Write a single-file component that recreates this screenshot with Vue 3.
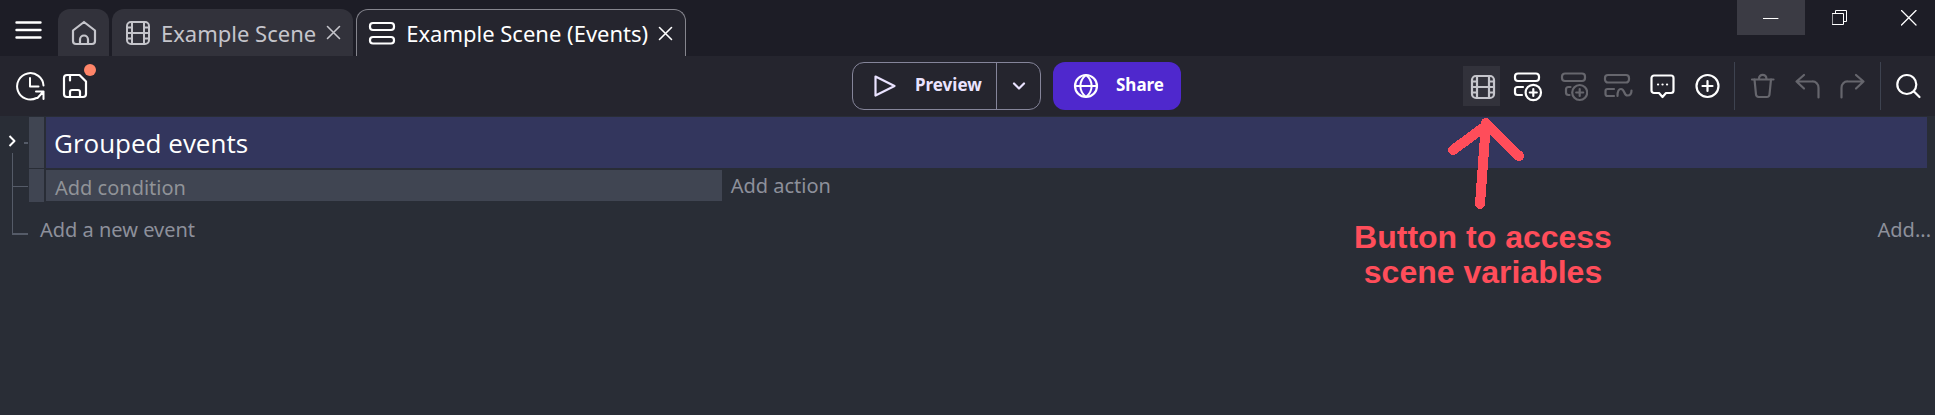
<script setup>
const film = [
  'M10 6H24a4 4 0 0 1 4 4V24a4 4 0 0 1-4 4H10a4 4 0 0 1-4-4V10a4 4 0 0 1 4-4Z',
  'M11 6V28M23 6V28M11 17H23M6 11.5H11M6 17H11M6 22.5H11M23 11.5H28M23 17H28M23 22.5H28',
]

const toolGroups = [
  [
    { label: 'Scene variables', boxed: true, paths: film },
    {
      label: 'Add an event',
      paths: [
        'M7 3.5H25a3 3 0 0 1 3 3V8a3 3 0 0 1-3 3H7a3 3 0 0 1-3-3V6.500a3 3 0 0 1 3-3Z',
        'M12 17H6.500A2.500 2.500 0 0 0 4 19.500V22.500A2.500 2.500 0 0 0 6.500 25H11',
        'M30 22.500a7.700 7.700 0 1 1-15.400 0a7.700 7.700 0 1 1 15.400 0Z',
        'M22.300 19V26M18.800 22.500H25.800',
      ],
    },
    {
      label: 'Add a sub-event',
      muted: true,
      paths: [
        'M9 3.5H26a3 3 0 0 1 3 3V8a3 3 0 0 1-3 3H9a3 3 0 0 1-3-3V6.500a3 3 0 0 1 3-3Z',
        'M14.500 17H12.500A2.500 2.500 0 0 0 10 19.500V22.500A2.500 2.500 0 0 0 12.500 25H13.500',
        'M31.200 22.500a7.500 7.500 0 1 1-15 0a7.500 7.500 0 1 1 15 0Z',
        'M23.700 19V26M20.200 22.500H27.200',
      ],
    },
    {
      label: 'Add another event',
      muted: true,
      paths: [
        'M7 5H25a3 3 0 0 1 3 3V9.500a3 3 0 0 1-3 3H7a3 3 0 0 1-3-3V8a3 3 0 0 1 3-3Z',
        'M13 19H6.500A2 2 0 0 0 4.500 21V24A2 2 0 0 0 6.500 26H13',
        'M16.500 26C16.500 21 18 19 20 19C24 19 22.500 25.500 26.500 25.500C29 25.500 30.500 23.500 30.500 20.500',
      ],
    },
    {
      label: 'Add a comment',
      paths: [
        'M8 5.500H25a2.500 2.500 0 0 1 2.500 2.500V20.500a2.500 2.500 0 0 1-2.500 2.500H20L16.500 27L13 23H8a2.500 2.500 0 0 1-2.500-2.500V8a2.500 2.500 0 0 1 2.500-2.500Z',
        'M12 14.500H12.100M16.500 14.500H16.600M21 14.500H21.100',
      ],
    },
    {
      label: 'Add another item',
      paths: ['M27.500 16a11 11 0 1 1-22 0a11 11 0 1 1 22 0Z', 'M16.500 11V21M11.500 16H21.500'],
    },
  ],
  [
    {
      label: 'Delete',
      muted: true,
      paths: ['M5 9.500H26.500M12 9.500V8.500a3.700 3.700 0 0 1 7.400 0V9.500', 'M7.500 9.500L9 24.500A2.800 2.800 0 0 0 11.700 27H19.700A2.800 2.800 0 0 0 22.500 24.500L24 9.500'],
    },
    { label: 'Undo', muted: true, paths: ['M12 5L4.500 11.500L12 18.500M4.500 11.500H20A6 6 0 0 1 26.500 18V27.500'] },
    { label: 'Redo', muted: true, paths: ['M19 5L26.500 11.500L19 18.500M26.500 11.500H11A6 6 0 0 0 4.500 18V27.500'] },
  ],
  [
    { label: 'Search', paths: ['M23.300 14.500a9.500 9.500 0 1 1-19 0a9.500 9.500 0 1 1 19 0Z', 'M21 21.500L26.500 27'] },
  ],
]
</script>

<template>
  <div class="editor">
    <header class="titlebar">
      <button class="menu" aria-label="Main menu">
        <svg width="28" height="20" viewBox="0 0 28 20"><path d="M2.500 2.500H26.500M2.500 10H26.500M2.500 17.500H26.500" stroke-width="2.400" /></svg>
      </button>
      <nav class="tabs" aria-label="Open editors">
        <div class="tab home">
          <button aria-label="Home">
            <svg width="26" height="26" viewBox="0 0 26 26"><path d="M2 10.500L13 2L24 10.500V21a3 3 0 0 1-3 3H5a3 3 0 0 1-3-3ZM9 24V19.500a4 4 0 0 1 8 0V24" stroke-width="2.200" /></svg>
          </button>
        </div>
        <div class="tab">
          <button class="tab-label">
            <svg width="26" height="26" viewBox="4 4 26 26"><path v-for="d in film" :key="d" :d="d" stroke-width="2" /></svg>
            <span>Example Scene</span>
          </button>
          <button aria-label="Close Example Scene">
            <svg width="15" height="15" viewBox="0 0 15 15"><path d="M1.500 1.500L13.500 13.500M13.500 1.500L1.500 13.500" stroke-width="1.600" /></svg>
          </button>
        </div>
        <div class="tab active">
          <button class="tab-label">
            <svg width="28" height="26" viewBox="0 0 28 26"><path d="M5 3H23a3 3 0 0 1 3 3V7a3 3 0 0 1-3 3H5a3 3 0 0 1-3-3V6a3 3 0 0 1 3-3ZM5 17H23a3 3 0 0 1 3 3V20.500a3 3 0 0 1-3 3H5a3 3 0 0 1-3-3V20a3 3 0 0 1 3-3Z" stroke-width="2.200" /></svg>
            <span>Example Scene (Events)</span>
          </button>
          <button aria-label="Close Example Scene (Events)">
            <svg width="15" height="15" viewBox="0 0 15 15"><path d="M1.500 1.500L13.500 13.500M13.500 1.500L1.500 13.500" stroke-width="1.600" /></svg>
          </button>
        </div>
      </nav>
      <div class="window-controls">
        <button class="minimize" aria-label="Minimize">
          <svg width="16" height="16" viewBox="0 0 16 16"><path d="M0 8.500H15" stroke-width="1" /></svg>
        </button>
        <button aria-label="Restore">
          <svg width="16" height="16" viewBox="0 0 16 16"><path d="M.5 3.500H11.500V14.500H.500ZM3.500 3.500V.500H14.500V11.500H11.500" stroke-width="1" stroke-linejoin="miter" /></svg>
        </button>
        <button class="close-window" aria-label="Close window">
          <svg width="16" height="16" viewBox="0 0 16 16"><path d="M.5 .500L15 15M15 .500L.500 15" stroke-width="1.300" /></svg>
        </button>
      </div>
    </header>

    <div class="toolbar">
      <div class="file-tools">
        <button aria-label="History">
          <svg width="30" height="32" viewBox="0 0 30 32"><path d="M28.500 15.500A13.200 13.200 0 1 0 21.500 28M15 8V16.500H23.500M21 21.500H28.500V29M28.500 21.500L22.500 28" stroke-width="2" /></svg>
        </button>
        <button class="save" aria-label="Save">
          <svg width="26" height="26" viewBox="0 0 26 26"><path d="M5 2H17.500L24 8.500V21a3 3 0 0 1-3 3H5a3 3 0 0 1-3-3V5a3 3 0 0 1 3-3ZM8 2V7.500M8 24V19a2 2 0 0 1 2-2H16a2 2 0 0 1 2 2V24" stroke-width="2.200" /></svg>
          <span class="unsaved"></span>
        </button>
      </div>
      <div class="main-actions">
        <div class="preview">
          <button class="preview-run">
            <svg width="24" height="24" viewBox="0 0 24 24"><path d="M2.500 2.500L21.500 12L2.500 21.500Z" stroke-width="2.200" /></svg>
            <span>Preview</span>
          </button>
          <button class="preview-more" aria-label="Preview options">
            <svg width="14" height="10" viewBox="0 0 14 10"><path d="M2 2.500L7 7.500L12 2.500" stroke-width="2.200" /></svg>
          </button>
        </div>
        <button class="share">
          <svg width="26" height="26" viewBox="0 0 26 26"><circle cx="13" cy="13" r="11" stroke-width="2.200" /><path d="M2 13H24M13 2C5.500 8 5.500 18 13 24C20.500 18 20.500 8 13 2Z" stroke-width="2" /></svg>
          <span>Share</span>
        </button>
      </div>
      <div class="tools">
        <template v-for="(group, g) in toolGroups" :key="g">
          <span v-if="g" class="divider"></span>
          <button v-for="tool in group" :key="tool.label" class="tool" :class="{ boxed: tool.boxed, muted: tool.muted }" :aria-label="tool.label">
            <svg width="32" height="32" viewBox="0 0 32 32"><path v-for="d in tool.paths" :key="d" :d="d" stroke-width="2.200" /></svg>
          </button>
        </template>
      </div>
    </div>

    <main class="sheet">
      <svg class="tree" width="29" height="120" viewBox="0 0 29 120">
        <path class="chevron" d="M9.500 19L14.500 24L9.500 29" />
        <path d="M12.500 36V116.500M12 69.500H28" stroke-width="1" />
        <path d="M24 26H28M12 117H28" stroke-width="2" />
      </svg>
      <div class="events">
        <div class="row">
          <span class="handle"></span>
          <h2 class="group-title">Grouped events</h2>
        </div>
        <div class="row body-row">
          <span class="handle"></span>
          <button class="condition">Add condition</button>
          <button class="action">Add action</button>
        </div>
        <div class="footer-row">
          <button>Add a new event</button>
          <button>Add...</button>
        </div>
      </div>
    </main>

    <div class="callout">
      <svg width="100" height="107" viewBox="0 0 100 107"><path d="M47 91L53 10M20 37L54 12L86 43" shape-rendering="crispEdges" /></svg>
      <p>Button to access<br />scene variables</p>
    </div>
  </div>
</template>

<style>
body {
  background: #292d36;
}
</style>

<style scoped>
.editor {
  position: relative;
  min-height: 100vh;
  background: #292d36;
  color: #fff;
  font-family: "Noto Sans", "Open Sans", sans-serif;
  overflow: hidden;
}
button {
  display: flex;
  align-items: center;
  margin: 0;
  padding: 0;
  border: 0;
  background: none;
  color: inherit;
  font: inherit;
  white-space: nowrap;
}
svg {
  display: block;
  flex: none;
  fill: none;
  stroke: currentColor;
  stroke-linecap: round;
  stroke-linejoin: round;
}
.titlebar {
  display: flex;
  height: 56px;
  background: #1d1d26;
}
.menu {
  height: 60px;
  padding: 0 16px 0 14px;
}
.tabs {
  display: flex;
  flex: 1;
  gap: 3px;
  padding-top: 9px;
}
.tab {
  display: flex;
  align-items: center;
  box-sizing: border-box;
  gap: 10px;
  padding: 0 12px 0 13px;
  border-radius: 12px 12px 0 0;
  background: #32323b;
  color: #c5c5cb;
  font-size: 22px;
}
.tab.active {
  padding: 0 12px 0 11px;
  border: 1px solid #85858d;
  border-bottom: 0;
  background: #25252e;
  color: #fff;
}
.tab-label {
  gap: 10px;
}
.window-controls {
  display: flex;
  align-items: flex-start;
  gap: 1px;
}
.window-controls button {
  justify-content: center;
  width: 68px;
  height: 35px;
}
.window-controls .minimize {
  background: #3b3b44;
}
.window-controls .close-window {
  box-sizing: border-box;
  width: 60px;
  padding-left: 8px;
}
.toolbar {
  display: grid;
  grid-template-columns: 852fr auto 754fr;
  align-items: center;
  height: 60px;
  background: #25252e;
}
.file-tools {
  display: flex;
  align-items: center;
  gap: 17px;
  padding-left: 15px;
}
.save {
  position: relative;
}
.unsaved {
  position: absolute;
  top: -9px;
  right: -8px;
  width: 12px;
  height: 12px;
  border-radius: 50%;
  background: #ff8569;
}
.main-actions {
  display: flex;
  gap: 12px;
  font-size: 17px;
  font-weight: 700;
}
.main-actions span {
  padding-bottom: 3px;
}
.preview {
  display: flex;
  box-sizing: border-box;
  width: 189px;
  height: 48px;
  border: 1px solid #85859a;
  border-radius: 12px;
  color: #eae3ff;
}
.preview-run {
  flex: 1;
  gap: 18px;
  padding-left: 20px;
}
.preview-more {
  justify-content: center;
  width: 44px;
  border-left: 1px solid #85859a;
}
.share {
  box-sizing: border-box;
  width: 128px;
  height: 48px;
  gap: 17px;
  padding-left: 20px;
  border-radius: 12px;
  background: #4f28cd;
}
.tools {
  display: flex;
  align-items: center;
  justify-content: flex-end;
  gap: 8px;
  padding-right: 8px;
}
.tool {
  justify-content: center;
  width: 37px;
  height: 40px;
}
.boxed {
  background: #32323b;
  color: #c5c5cb;
}
.muted {
  color: #66666d;
}
.divider {
  width: 1px;
  height: 48px;
  margin: 0 1px;
  background: #3e4350;
}
.sheet {
  display: flex;
  padding: 1px 8px 0 0;
}
.tree {
  stroke: #555b68;
  stroke-linecap: butt;
}
.chevron {
  stroke: #fff;
  stroke-width: 2;
}
.events {
  flex: 1;
  min-width: 0;
  color: #8d909b;
  font-size: 20px;
}
.row {
  display: flex;
  gap: 2px;
}
.handle {
  width: 15px;
  background: #404552;
}
.group-title {
  flex: 1;
  margin: 0;
  padding: 1px 8px 0;
  background: #33365d;
  color: #fff;
  font-family: "Open Sans", "Noto Sans", sans-serif;
  font-size: 26px;
  font-weight: 400;
  line-height: 50px;
}
.body-row {
  height: 33px;
  margin-top: 1px;
}
.condition {
  box-sizing: border-box;
  width: 35.6%;
  height: 31px;
  margin-top: 1px;
  padding: 4px 9px 0;
  background: #404552;
  color: #909398;
  line-height: 27px;
}
.action {
  padding: 0 7px;
  line-height: 30px;
}
.footer-row {
  display: flex;
  justify-content: space-between;
  margin-right: -4px;
  padding: 14px 0 0 11px;
  line-height: 28px;
}
.callout {
  position: absolute;
  top: 113px;
  right: 302px;
  width: 300px;
  color: #ff4d5a;
  font: 700 32px/35px "Liberation Sans", Arial, sans-serif;
  text-align: center;
}
.callout svg {
  margin: 0 auto;
  stroke-width: 10;
}
.callout p {
  margin: 0;
}
</style>
